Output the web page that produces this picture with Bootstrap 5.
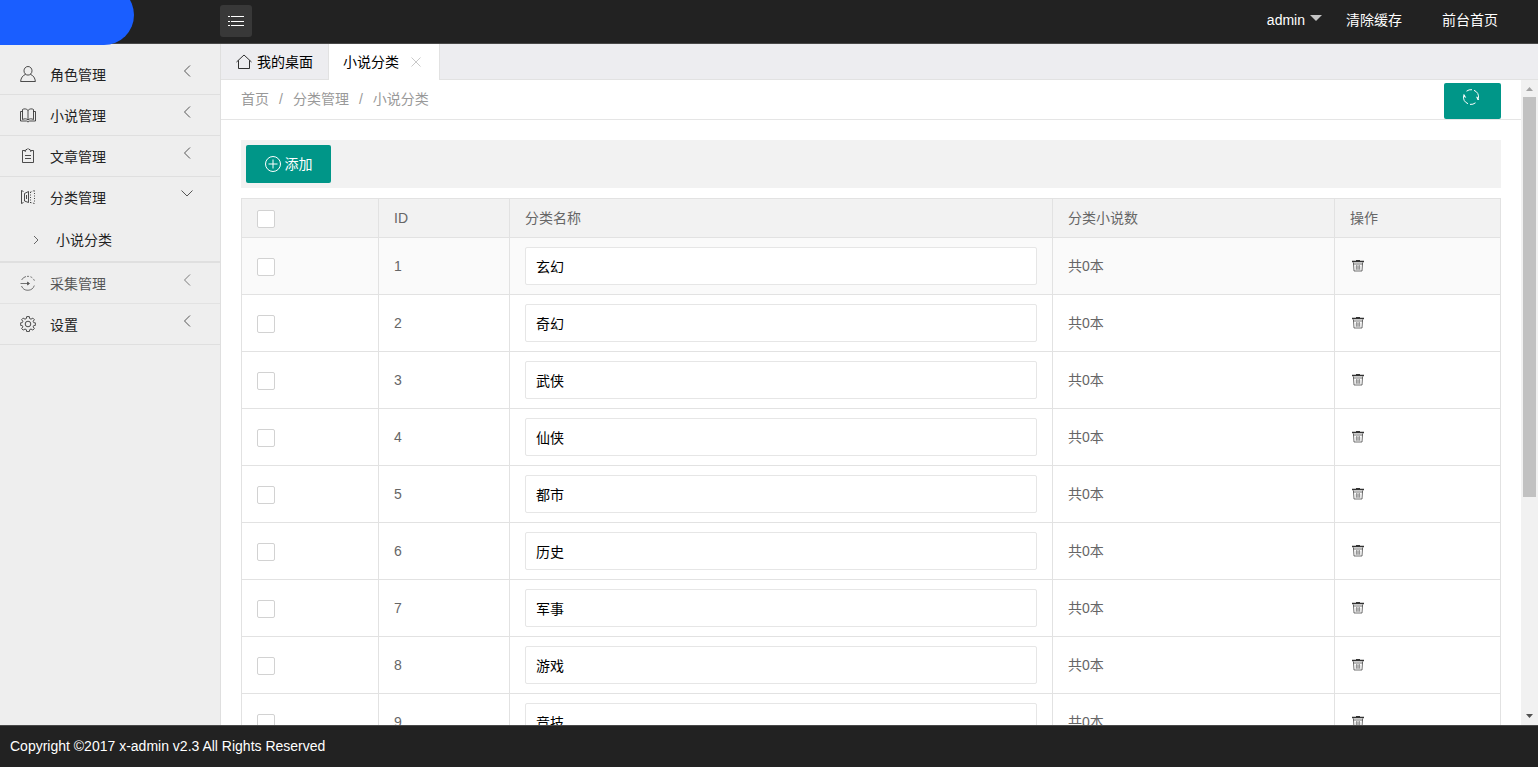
<!DOCTYPE html>
<html lang="zh-CN">
<head>
<meta charset="utf-8">
<meta name="viewport" content="width=device-width, initial-scale=1">
<title>小说分类</title>
<link href="https://cdn.jsdelivr.net/npm/bootstrap@5.3.0/dist/css/bootstrap.min.css" rel="stylesheet">
<style>
body{font:14px/20px "Liberation Sans","Noto Sans CJK SC",sans-serif;color:#000;background:#fff}
a{color:inherit;text-decoration:none}
svg{fill:none;stroke:currentColor;flex:none}
.ico{width:16px;height:16px}
.topbar{height:44px;background:#222;color:#fff;border-bottom:1px solid #484848;flex:none}
.logo-cell{width:220px;height:45px;overflow:hidden;z-index:1}
.logo-mark{width:134px;height:60px;margin-top:-15px;background:#1a5eff;border-radius:0 30px 30px 0}
.toggle-btn{width:32px;height:32px;margin-top:5px;background:#383838;border:0;border-radius:3px;color:#fff}
.user-menu{gap:40px;margin-right:40px;line-height:40px}
.caret-down{border:6px solid transparent;border-top-color:#c4c4c4;border-bottom:0;margin-left:5px;margin-top:-4px}
.side-menu{width:221px;background:#eee;border-right:1px solid #dfdfdf;padding-top:10px;color:#222}
.side-link{height:41px;padding:1px 27px 0 20px;border-bottom:1px solid #dfdfdf}
.side-link.opened{border-bottom:0}
.side-link .ico{margin:0 14px 2px 0;stroke-width:.8}
.side-link .arrow{width:12px;height:14px;margin:0 0 8px auto;color:#555}
.sub-list{border-bottom:2px solid #dfdfdf;height:45px;padding:0 31px}
.sub-list .arrow{width:10px;height:12px;margin-right:15px;color:#666}
.tab-strip{height:36px;background:#ededf0;border-bottom:1px solid #e2e2e2;flex:none}
.tab-link{padding:0 15px;height:36px;border-right:1px solid #e2e2e2}
.tab-link svg{margin-right:5px;stroke-width:.8}
.tab-link.current{background:#fff;padding:0 18px 0 14px}
.tab-close{border:0;background:none;color:#bbb;padding:0;margin-left:12px}
.crumbs{height:40px;border-bottom:1px solid #e5e5e5;padding:0 20px;color:#999}
.crumbs .breadcrumb{--bs-breadcrumb-divider-color:#999;--bs-breadcrumb-item-padding-x:10px;font-size:14px;padding-bottom:2px}
.teal-btn{background:#009688;color:#fff;border:0;border-radius:2px}
.reload-btn{width:57px;height:36px;padding:0 9px 8px 6px;margin-top:3px}
.reload-btn svg{width:18px;height:18px}
.add-btn{width:85px;height:38px}
.page-body{overflow-y:auto;scrollbar-width:none}
.page-body::-webkit-scrollbar{display:none}
.content-pad{padding:20px}
.tool-row{background:#f2f2f2;padding:5px;margin-bottom:10px}
.grid-table{table-layout:fixed;width:100%;border-collapse:collapse;color:#666}
.grid-table th,.grid-table td{border:1px solid #e2e2e2;padding:9px 15px;height:57px;font-weight:400;text-align:left;vertical-align:middle}
.grid-table th{background:#f2f2f2;height:39px;padding:0 15px}
.grid-table tbody tr:first-child{background:#fafafa}
.col-check{width:137px}.col-id{width:131px}.col-count{width:282px}.col-act{width:166px}
.box{appearance:none;display:block;width:18px;height:18px;margin:2px 0 0;border:1px solid #d2d2d2;border-radius:2px;background:#fff}
.box:checked{background:#009688}
.name-input{display:block;width:100%;height:38px;padding:0 10px;border:1px solid #e6e6e6;border-radius:2px;background:#fff;color:#000}
.del-btn{display:block;border:0;background:none;padding:0;margin:0 0 0 2px;color:#333}
.del-btn svg{display:block;width:12px;height:12px}
.scroll-rail{width:17px;background:#f1f1f1;flex:none}
.scroll-rail svg{width:17px;height:17px;stroke:none}
.scroll-thumb{width:13px;height:62%;background:#c1c1c1}
.copyright{height:43px;background:#222;color:#fff;border-top:1px solid #484848;border-bottom:1px solid #fff;padding:0 10px 2px;flex:none}
</style>
</head>
<body class="vh-100 d-flex flex-column overflow-hidden">
<svg class="d-none">
  <symbol id="user" viewBox="0 0 16 16"><ellipse cx="8" cy="4.800" rx="4" ry="4.300"/><path d="M5.600 8.300C2.700 9.500.9 12 .6 15.500h14.800C15.100 12 13.300 9.500 10.400 8.300"/></symbol>
  <symbol id="book" viewBox="0 0 16 16"><path d="M8 3.500C6.500 1.500 4 1.500 2.500 2.500v10c2-1 4-1 5.500.5 1.500-1.500 3.500-1.500 5.500-.5v-10C12 1.500 9.500 1.500 8 3.500v9.500M2.500 4.500h-2v9.500h6l1.500 1 1.500-1h6V4.500h-2"/></symbol>
  <symbol id="clip" viewBox="0 0 16 16"><path d="M5 2.500H2.500v12h11v-12H11M5 4l1-2.500h1L8 .5l1 1h1L11 4M5 7.500h6M5 10.500h6"/></symbol>
  <symbol id="flip" viewBox="0 0 16 16"><path d="M3.500 2.500l-2-1v13l2-1M4.500 4.500L8.500 2.500v11l-4-1.500zM6.500 6v4"/><path stroke-dasharray="1 1.500" d="M10.500 3v11M14.500 1.500v13M10.500 3l4-1.500M10.500 13.500l4 1"/></symbol>
  <symbol id="collect" viewBox="0 0 16 16"><path d="M14.300 10.500A6.800 6.800 0 0 1 1.500 11M1.600 5A6.800 6.800 0 0 1 6 1.500M.5 8.500H8"/><path stroke-dasharray="2 1.500" d="M7 1.400a6.800 6.800 0 0 1 7.500 4.600"/><path fill="currentColor" d="M7.500 7l2 1.500-2 1.500z"/></symbol>
  <symbol id="gear" viewBox="0 0 16 16"><circle cx="8" cy="8" r="2.800"/><path d="M6.700.6h2.600l.4 2 1.300.6 1.800-1.100 1.500 1.500-1.100 1.800.6 1.300 2 .4v2l-2 .4-.6 1.300 1.100 1.800-1.500 1.500-1.800-1.100-1.300.6-.4 2H6.700l-.4-2-1.300-.6-1.800 1.100-1.500-1.500 1.100-1.800-.6-1.300-2-.4v-2l2-.4.6-1.300-1.100-1.800 1.500-1.500L5 3.200l1.300-.6z"/></symbol>
  <symbol id="left" viewBox="0 0 12 14"><path d="M9 1.500L3.500 7 9 12.500"/></symbol>
  <symbol id="down" viewBox="0 0 12 14"><path d="M.5 3.500L6 9l5.500-5.500"/></symbol>
  <symbol id="right" viewBox="0 0 10 12"><path d="M3 2l4 4-4 4"/></symbol>
  <symbol id="trash" viewBox="0 0 12 12"><path stroke-width="1.400" d="M0 1.500h12M4 .5h4"/><path stroke-width=".7" d="M1.500 2.500v1.500h9V2.500M1.500 4l.5 7h8l.5-7"/><path stroke="#888" stroke-width=".8" d="M4.500 5v4.500M6 5v4.500M7.500 5v4.500M3.500 7h5M3.500 9h5"/></symbol>
</svg>

<header class="topbar d-flex align-items-start">
  <div class="logo-cell"><div class="logo-mark"></div></div>
  <button class="toggle-btn d-flex align-items-center justify-content-center p-0" type="button" aria-label="菜单"><svg width="18" height="16" viewBox="0 0 18 16"><path d="M1 3.500h2M4 3.500h13M1 8.500h2M4 8.500h13M1 12.500h2M4 12.500h13"/></svg></button>
  <nav class="user-menu d-flex ms-auto">
    <div class="d-flex gap-4"><a href="#" class="d-flex align-items-center">admin<span class="caret-down"></span></a><a href="#">清除缓存</a></div>
    <a href="#">前台首页</a>
  </nav>
</header>

<div class="d-flex flex-grow-1 overflow-hidden">
  <nav class="side-menu flex-shrink-0">
    <a href="#" class="side-link d-flex align-items-center"><svg class="ico"><use href="#user"/></svg>角色管理<svg class="arrow"><use href="#left"/></svg></a>
    <a href="#" class="side-link d-flex align-items-center"><svg class="ico"><use href="#book"/></svg>小说管理<svg class="arrow"><use href="#left"/></svg></a>
    <a href="#" class="side-link d-flex align-items-center"><svg class="ico"><use href="#clip"/></svg>文章管理<svg class="arrow"><use href="#left"/></svg></a>
    <a href="#" class="side-link opened d-flex align-items-center"><svg class="ico"><use href="#flip"/></svg>分类管理<svg class="arrow"><use href="#down"/></svg></a>
    <div class="sub-list d-flex align-items-center"><a href="#" class="d-flex align-items-center"><svg class="arrow"><use href="#right"/></svg>小说分类</a></div>
    <a href="#" class="side-link d-flex align-items-center opacity-75"><svg class="ico"><use href="#collect"/></svg>采集管理<svg class="arrow"><use href="#left"/></svg></a>
    <a href="#" class="side-link d-flex align-items-center"><svg class="ico"><use href="#gear"/></svg>设置<svg class="arrow"><use href="#left"/></svg></a>
  </nav>

  <div class="d-flex flex-column flex-grow-1 overflow-hidden">
    <div class="tab-strip d-flex">
      <a href="#" class="tab-link d-flex align-items-center"><svg width="16" height="16" viewBox="0 0 16 16"><path d="M.5 8L8 1l7.500 7M2.500 6.500v8h11v-8"/></svg>我的桌面</a>
      <div class="tab-link current d-flex align-items-center"><a href="#">小说分类</a><button class="tab-close d-flex" type="button" aria-label="关闭"><svg class="m-0" width="10" height="10" viewBox="0 0 10 10"><path d="M.5.5l9 9M9.500.5l-9 9"/></svg></button></div>
    </div>
    <div class="d-flex flex-grow-1 overflow-hidden">
      <main class="page-body flex-grow-1">
        <div class="crumbs d-flex justify-content-between">
          <ol class="breadcrumb mb-0 align-items-center"><li class="breadcrumb-item"><a href="#">首页</a></li><li class="breadcrumb-item"><a href="#">分类管理</a></li><li class="breadcrumb-item">小说分类</li></ol>
          <button class="teal-btn reload-btn d-flex align-items-center justify-content-center" type="button" aria-label="刷新"><svg viewBox="0 0 18 18"><path d="M1.700 7.500A7.400 7.400 0 0 0 6 15.700M8 16.400A7.400 7.400 0 0 0 13.500 14.800M4.500 3.200A7.400 7.400 0 0 1 10 1.700M12 2.300A7.400 7.400 0 0 1 16.300 10.500"/><path fill="currentColor" stroke="none" d="M1 6.500l1.500 0 1.800 3.500-2-1zM17.200 12h-1.700l-1.500-3.500 2 1z"/></svg></button>
        </div>
        <div class="content-pad">
          <div class="tool-row"><button class="teal-btn add-btn d-flex align-items-center justify-content-center gap-1" type="button"><svg class="ico" viewBox="0 0 16 16"><circle cx="8" cy="8" r="7.500"/><path d="M8 3.500v9M3.500 8h9"/></svg>添加</button></div>
          <table class="grid-table">
            <colgroup><col class="col-check"><col class="col-id"><col><col class="col-count"><col class="col-act"></colgroup>
            <thead><tr><th><input class="box" type="checkbox" aria-label="全选"></th><th>ID</th><th>分类名称</th><th>分类小说数</th><th>操作</th></tr></thead>
            <tbody>
              <tr><td><input class="box" type="checkbox" aria-label="选择 1"></td><td>1</td><td><input class="name-input" type="text" aria-label="分类名称 1" value="玄幻"></td><td>共0本</td><td><button class="del-btn" type="button" aria-label="删除"><svg><use href="#trash"/></svg></button></td></tr>
              <tr><td><input class="box" type="checkbox" aria-label="选择 2"></td><td>2</td><td><input class="name-input" type="text" aria-label="分类名称 2" value="奇幻"></td><td>共0本</td><td><button class="del-btn" type="button" aria-label="删除"><svg><use href="#trash"/></svg></button></td></tr>
              <tr><td><input class="box" type="checkbox" aria-label="选择 3"></td><td>3</td><td><input class="name-input" type="text" aria-label="分类名称 3" value="武侠"></td><td>共0本</td><td><button class="del-btn" type="button" aria-label="删除"><svg><use href="#trash"/></svg></button></td></tr>
              <tr><td><input class="box" type="checkbox" aria-label="选择 4"></td><td>4</td><td><input class="name-input" type="text" aria-label="分类名称 4" value="仙侠"></td><td>共0本</td><td><button class="del-btn" type="button" aria-label="删除"><svg><use href="#trash"/></svg></button></td></tr>
              <tr><td><input class="box" type="checkbox" aria-label="选择 5"></td><td>5</td><td><input class="name-input" type="text" aria-label="分类名称 5" value="都市"></td><td>共0本</td><td><button class="del-btn" type="button" aria-label="删除"><svg><use href="#trash"/></svg></button></td></tr>
              <tr><td><input class="box" type="checkbox" aria-label="选择 6"></td><td>6</td><td><input class="name-input" type="text" aria-label="分类名称 6" value="历史"></td><td>共0本</td><td><button class="del-btn" type="button" aria-label="删除"><svg><use href="#trash"/></svg></button></td></tr>
              <tr><td><input class="box" type="checkbox" aria-label="选择 7"></td><td>7</td><td><input class="name-input" type="text" aria-label="分类名称 7" value="军事"></td><td>共0本</td><td><button class="del-btn" type="button" aria-label="删除"><svg><use href="#trash"/></svg></button></td></tr>
              <tr><td><input class="box" type="checkbox" aria-label="选择 8"></td><td>8</td><td><input class="name-input" type="text" aria-label="分类名称 8" value="游戏"></td><td>共0本</td><td><button class="del-btn" type="button" aria-label="删除"><svg><use href="#trash"/></svg></button></td></tr>
              <tr><td><input class="box" type="checkbox" aria-label="选择 9"></td><td>9</td><td><input class="name-input" type="text" aria-label="分类名称 9" value="竞技"></td><td>共0本</td><td><button class="del-btn" type="button" aria-label="删除"><svg><use href="#trash"/></svg></button></td></tr>
            </tbody>
          </table>
        </div>
      </main>
      <div class="scroll-rail d-flex flex-column align-items-center" aria-hidden="true">
        <svg viewBox="0 0 17 17"><path fill="#a3a3a3" d="M5 11h7L8.500 7z"/></svg>
        <div class="scroll-thumb"></div>
        <svg class="mt-auto" viewBox="0 0 17 17"><path fill="#505050" d="M5 6h7l-3.500 4z"/></svg>
      </div>
    </div>
  </div>
</div>

<footer class="copyright d-flex align-items-center">Copyright ©2017 x-admin v2.3 All Rights Reserved</footer>
<script src="https://cdn.jsdelivr.net/npm/bootstrap@5.3.0/dist/js/bootstrap.bundle.min.js"></script>
</body>
</html>
